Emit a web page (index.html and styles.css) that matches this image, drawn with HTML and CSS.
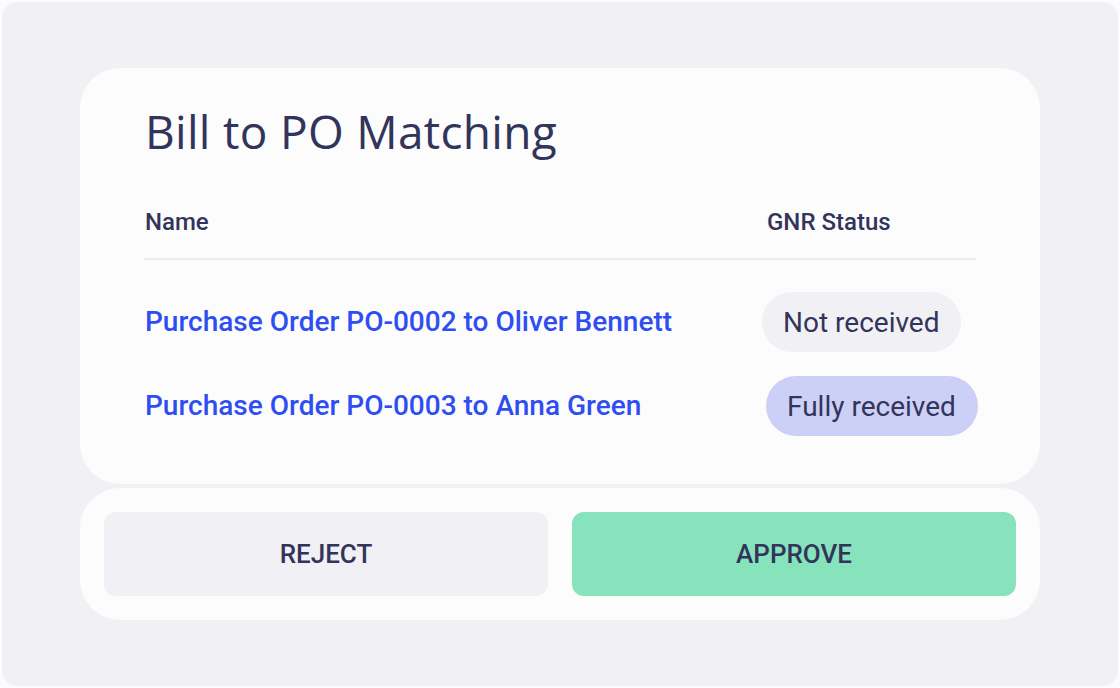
FILE: index.html
```html
<!DOCTYPE html>
<html>
<head>
<meta charset="utf-8">
<link rel="stylesheet" href="styles.css">
</head>
<body>
<div class="frame">
  <section class="card">
    <h1 class="title">Bill to PO Matching</h1>
    <div class="grid head">
      <div class="col-name">Name</div>
      <div class="col-status head-status">GNR Status</div>
    </div>
    <div class="divider"></div>
    <div class="rows">
      <div class="grid row">
        <a class="link">Purchase Order PO-0002 to Oliver Bennett</a>
        <div class="col-status"><span class="pill pill-grey">Not received</span></div>
      </div>
      <div class="grid row">
        <a class="link">Purchase Order PO-0003 to Anna Green</a>
        <div class="col-status"><span class="pill pill-blue">Fully received</span></div>
      </div>
    </div>
  </section>
  <section class="actions">
    <button class="btn btn-reject">REJECT</button>
    <button class="btn btn-approve">APPROVE</button>
  </section>
</div>
</body>
</html>
```
FILE: styles.css
```css
* { box-sizing: border-box; }
html, body { margin: 0; padding: 0; }
body {
  background: #fcfcfd;
  font-family: Roboto, "Liberation Sans", sans-serif;
  color: #32345a;
  width: 1120px;
  height: 688px;
  overflow: hidden;
}
.frame {
  margin: 2px;
  width: 1116px;
  height: 684px;
  background: #f0f0f5;
  border-radius: 16px;
  padding: 66px 78px;
  display: flex;
  flex-direction: column;
  gap: 4px;
}
.card {
  background: #fcfcfd;
  border-radius: 40px;
  padding: 31px 64px 48px 65px;
}
.title {
  margin: 0;
  font-family: "Open Sans", Lato, sans-serif;
  font-weight: 400;
  font-size: 46px;
  letter-spacing: 0.3px;
  line-height: 64px;
  height: 64px;
  color: #32345a;
}
.grid {
  display: grid;
  grid-template-columns: 617px 1fr;
  align-items: center;
}
.head {
  margin-top: 45px;
  font-size: 24px;
  font-weight: 500;
  line-height: 28px;
  padding-bottom: 22px;
}
.head-status { padding-left: 5px; }
.divider {
  height: 2px;
  background: #ececf2;
  margin-left: -1px;
}
.rows {
  margin-top: 32px;
  display: flex;
  flex-direction: column;
  gap: 24px;
}
.row { height: 60px; }
.link {
  color: #2f4ef2;
  font-size: 28px;
  font-weight: 500;
  text-decoration: none;
  line-height: 32px;
  white-space: nowrap;
}
.pill {
  display: inline-flex;
  align-items: center;
  height: 60px;
  border-radius: 30px;
  padding: 0 22px 0 21px;
  font-size: 28px;
  color: #32345a;
  white-space: nowrap;
}
.pill-grey { background: #f0f0f5; }
.pill-blue { background: #cdd0f6; margin-left: 4px; }
.actions {
  background: #fcfcfd;
  border-radius: 40px;
  padding: 24px;
  display: flex;
  gap: 24px;
}
.btn {
  flex: 1;
  height: 84px;
  border: none;
  border-radius: 12px;
  font-family: Roboto, "Liberation Sans", sans-serif;
  font-size: 26px;
  font-weight: 500;
  color: #32345a;
}
.btn-reject { background: #f0f0f5; }
.btn-approve { background: #86e3bc; }
```
